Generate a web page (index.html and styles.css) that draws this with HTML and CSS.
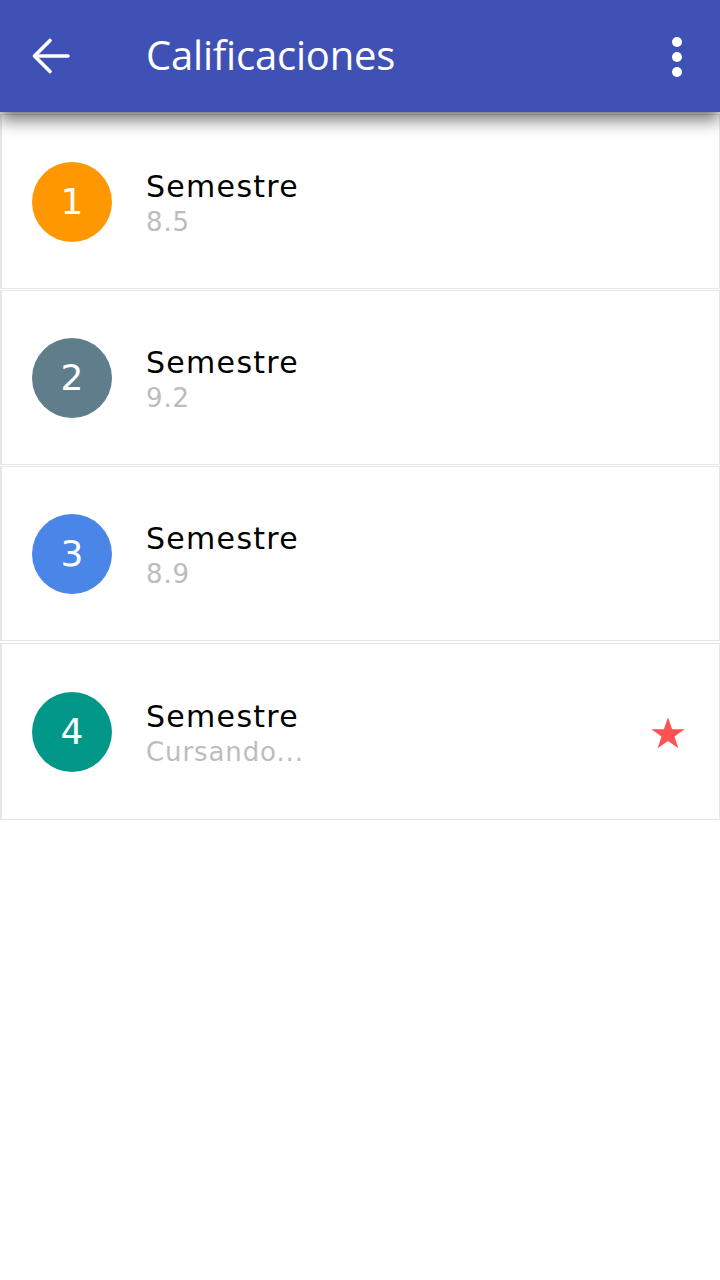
FILE: index.html
```html
<!DOCTYPE html>
<html lang="es">
<head>
<meta charset="utf-8">
<title>Calificaciones</title>
<link rel="stylesheet" href="styles.css">
</head>
<body>
<header class="appbar">
  <div class="nav-btn">
    <svg width="48" height="48" viewBox="0 0 48 48"><path d="M8.5 24H42M24 8.5L8.5 24 24 39.5" fill="none" stroke="#fff" stroke-width="3.6" stroke-linecap="round" stroke-linejoin="round"/></svg>
  </div>
  <h1 class="title">Calificaciones</h1>
  <div class="menu-btn">
    <span class="dot"></span><span class="dot"></span><span class="dot"></span>
  </div>
</header>
<main class="list">
  <div class="card">
    <div class="avatar orange">1</div>
    <div class="texts"><div class="primary">Semestre</div><div class="secondary">8.5</div></div>
  </div>
  <div class="card">
    <div class="avatar slate">2</div>
    <div class="texts"><div class="primary">Semestre</div><div class="secondary">9.2</div></div>
  </div>
  <div class="card">
    <div class="avatar blue">3</div>
    <div class="texts"><div class="primary">Semestre</div><div class="secondary">8.9</div></div>
  </div>
  <div class="card last">
    <div class="avatar teal">4</div>
    <div class="texts"><div class="primary">Semestre</div><div class="secondary">Cursando...</div></div>
    <div class="star">
      <svg width="40" height="40" viewBox="0 0 24 24"><path d="M12 3.2l2.47 7.1h7.5l-6.07 4.4 2.32 7.1L12 17.4l-6.22 4.4 2.32-7.1L2.03 10.3h7.5z" fill="#ff5252"/></svg>
    </div>
  </div>
</main>
</body>
</html>
```
FILE: styles.css
```css
* { box-sizing: border-box; }
html, body { margin: 0; padding: 0; background: #fff; }
body { width: 720px; height: 1280px; font-family: "Open Sans", "Noto Sans", sans-serif; }

.appbar {
  position: relative;
  z-index: 2;
  height: 112px;
  background: #3f51b5;
  display: flex;
  align-items: center;
  padding: 0 20px 0 26px;
  box-shadow: 0 8px 16px rgba(0,0,0,0.55);
}
.nav-btn { width: 48px; height: 48px; display: flex; }
.title {
  margin: 0 0 0 72px;
  flex: 1;
  color: #fff;
  font-family: "Open Sans", sans-serif;
  font-weight: 400;
  font-size: 40px;
  letter-spacing: -0.2px;
  line-height: 1;
  padding-bottom: 2px;
}
.menu-btn {
  width: 16px;
  display: flex;
  flex-direction: column;
  align-items: center;
  gap: 5px;
  margin-right: 15px;
  padding-top: 2px;
}
.dot { width: 10px; height: 10px; border-radius: 50%; background: #fff; }

.list { padding-top: 2px; }
.card {
  height: 175px;
  margin-bottom: 1px;
  border: 1px solid #e6e6e6;
  border-left-width: 2px;
  display: flex;
  align-items: center;
  padding: 0 30px;
}
.card.last { margin-top: 2px; height: 177px; }
.avatar {
  width: 80px; height: 80px; border-radius: 50%;
  color: #fff;
  display: flex; align-items: center; justify-content: center;
  font-family: "DejaVu Sans", sans-serif;
  font-size: 36px;
  flex: none;
}
.orange { background: #ff9800; }
.slate { background: #607d8b; }
.blue { background: #4a86e8; }
.teal { background: #009688; }
.texts { margin-left: 34px; flex: 1; padding-top: 6px; }
.primary {
  font-family: "DejaVu Sans", sans-serif;
  font-size: 30px;
  color: #000;
  line-height: 34px;
  letter-spacing: 1.3px;
}
.secondary {
  font-family: "DejaVu Sans", sans-serif;
  font-size: 26px;
  color: #bdbdbd;
  line-height: 36px;
  letter-spacing: 0.9px;
}
.star { width: 40px; height: 40px; margin-right: 1px; }
```
